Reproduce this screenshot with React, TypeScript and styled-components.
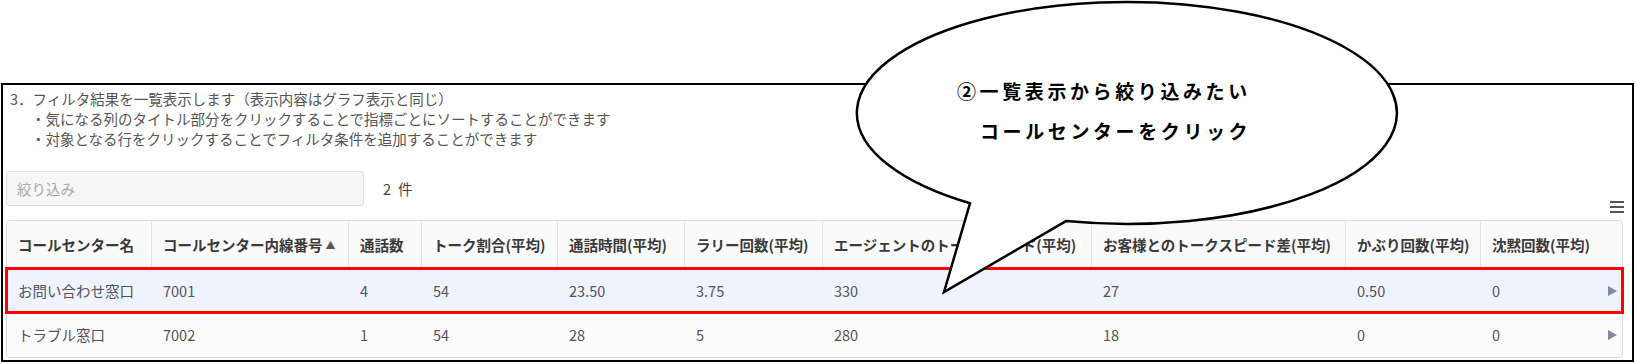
import React from 'react';
import styled, { createGlobalStyle } from 'styled-components';

// global

const GlobalStyle = createGlobalStyle`
    * { box-sizing: border-box; }
    html, body { margin: 0; padding: 0; background: #fff; }
    body { font-family: "Noto Sans CJK JP", "Noto Sans", sans-serif; }
`;

// layout

const Page = styled.div`
    position: relative;
    width: 1635px;
    height: 364px;
    padding: 83px 1px 0 1px;
    overflow: hidden;
`;

const Frame = styled.section`
    height: 279px;
    border: 2px solid #000;
    padding: 4px 9px 0 2px;
    display: flex;
    flex-direction: column;
`;

const Notes = styled.div`
    padding-left: 5px;
    color: #555;
    font-size: 14.5px;
    line-height: 20px;
`;

const NoteLine = styled.div<{ $indent?: boolean }>`
    padding-left: ${p => (p.$indent ? '21px' : '0')};
    white-space: nowrap;
`;

const Toolbar = styled.div`
    display: flex;
    align-items: center;
    height: 35px;
    margin-top: 22px;
    padding-left: 1px;
`;

const SearchInput = styled.input`
    width: 358px;
    height: 35px;
    border: 1px solid #dedede;
    border-radius: 3px;
    background: #f6f6f6;
    padding: 0 10px;
    font-family: inherit;
    font-size: 14.5px;
    color: #555;
    outline: none;
    &::placeholder { color: #aaa; }
`;

const Count = styled.span`
    display: flex;
    gap: 7px;
    margin-left: 19px;
    font-size: 14.5px;
    color: #444;
`;

const MenuButton = styled.button`
    margin-left: auto;
    align-self: flex-end;
    margin-bottom: -7px;
    margin-right: -1px;
    padding: 0;
    border: none;
    background: none;
    display: flex;
`;

// table

const COLS = '145px 197px 73px 136px 127px 138px 269px 254px 135px 141px';

const Table = styled.div`
    margin: 14px 0 0 1px;
    border: 1px solid #dcdcdc;
    border-radius: 4px;
    background: #fff;
`;

const HeaderRow = styled.div`
    display: grid;
    grid-template-columns: ${COLS};
    height: 48px;
    border-bottom: 1px solid #dedede;
    background: #fafafa;
    border-radius: 4px 4px 0 0;
`;

const HeadCell = styled.div`
    display: flex;
    align-items: center;
    padding: 0 11px;
    font-size: 14.5px;
    font-weight: 700;
    color: #3a3a3a;
    white-space: nowrap;
    border-right: 1px solid #e4e4e4;
    &:last-child { border-right: none; }
`;

const SortMark = styled.span`
    font-size: 10px;
    color: #555;
    margin-left: 3px;
    font-weight: 400;
`;

const Row = styled.div<{ $selected?: boolean }>`
    position: relative;
    z-index: ${p => (p.$selected ? 1 : 0)};
    display: grid;
    grid-template-columns: ${COLS};
    height: 43px;
    background: ${p => (p.$selected ? '#eef3fd' : '#fcfcfc')};
    outline: ${p => (p.$selected ? '3px solid #ff0000' : 'none')};
    outline-offset: -1px;
    &:last-child { border-radius: 0 0 4px 4px; height: 45px; }
`;

const Cell = styled.div<{ $last?: boolean }>`
    display: flex;
    align-items: center;
    justify-content: ${p => (p.$last ? 'space-between' : 'flex-start')};
    padding: ${p => (p.$last ? '0 5px 0 11px' : '0 11px')};
    font-size: 14.5px;
    color: #555;
    white-space: nowrap;
`;

const RowArrow = styled.span`
    width: 0;
    height: 0;
    border-top: 5px solid transparent;
    border-bottom: 5px solid transparent;
    border-left: 9px solid #7c8ca4;
`;

// callout

const Callout = styled.svg`
    position: absolute;
    z-index: 2;
    left: 850px;
    top: 0;
    width: 560px;
    height: 300px;
    pointer-events: none;
`;

const CalloutText = styled.text`
    font-family: "Noto Sans CJK JP", sans-serif;
    font-size: 19px;
    font-weight: 700;
    letter-spacing: 3.6px;
    fill: #000;
`;

const headers = [
    'コールセンター名',
    'コールセンター内線番号',
    '通話数',
    'トーク割合(平均)',
    '通話時間(平均)',
    'ラリー回数(平均)',
    'エージェントのトークスピード(平均)',
    'お客様とのトークスピード差(平均)',
    'かぶり回数(平均)',
    '沈黙回数(平均)',
];

const rows = [
    ['お問い合わせ窓口', '7001', '4', '54', '23.50', '3.75', '330', '27', '0.50', '0'],
    ['トラブル窓口', '7002', '1', '54', '28', '5', '280', '18', '0', '0'],
];

export default function App(): React.ReactElement {
    return <Page>
        <GlobalStyle />
        <Frame>
            <Notes>
                <NoteLine>3．フィルタ結果を一覧表示します（表示内容はグラフ表示と同じ）</NoteLine>
                <NoteLine $indent>・気になる列のタイトル部分をクリックすることで指標ごとにソートすることができます</NoteLine>
                <NoteLine $indent>・対象となる行をクリックすることでフィルタ条件を追加することができます</NoteLine>
            </Notes>
            <Toolbar>
                <SearchInput placeholder="絞り込み" />
                <Count><span>{rows.length}</span><span>件</span></Count>
                <MenuButton aria-label="menu">
                    <svg width="14" height="12" viewBox="0 0 14 12">
                        <rect x="0" y="0" width="14" height="2" fill="#555" />
                        <rect x="0" y="5" width="14" height="2" fill="#555" />
                        <rect x="0" y="10" width="14" height="2" fill="#555" />
                    </svg>
                </MenuButton>
            </Toolbar>
            <Table>
                <HeaderRow>
                    {headers.map((h, i) => <HeadCell key={h}>
                        {h}{i === 1 && <SortMark>▲</SortMark>}
                    </HeadCell>)}
                </HeaderRow>
                {rows.map((r, ri) => <Row key={r[0]} $selected={ri === 0}>
                    {r.map((v, ci) => <Cell key={ci} $last={ci === r.length - 1}>
                        {v}{ci === r.length - 1 && <RowArrow />}
                    </Cell>)}
                </Row>)}
            </Table>
        </Frame>
        <Callout viewBox="0 0 560 300">
            <path
                d="M120 203.3 A270 111 0 1 1 216 221.1 L94 292 Z"
                fill="#fff"
                stroke="#000"
                strokeWidth="2.5"
                strokeLinejoin="miter"
            />
            <CalloutText x="107" y="99">②一覧表示から絞り込みたい</CalloutText>
            <CalloutText x="130" y="139">コールセンターをクリック</CalloutText>
        </Callout>
    </Page>;
}
